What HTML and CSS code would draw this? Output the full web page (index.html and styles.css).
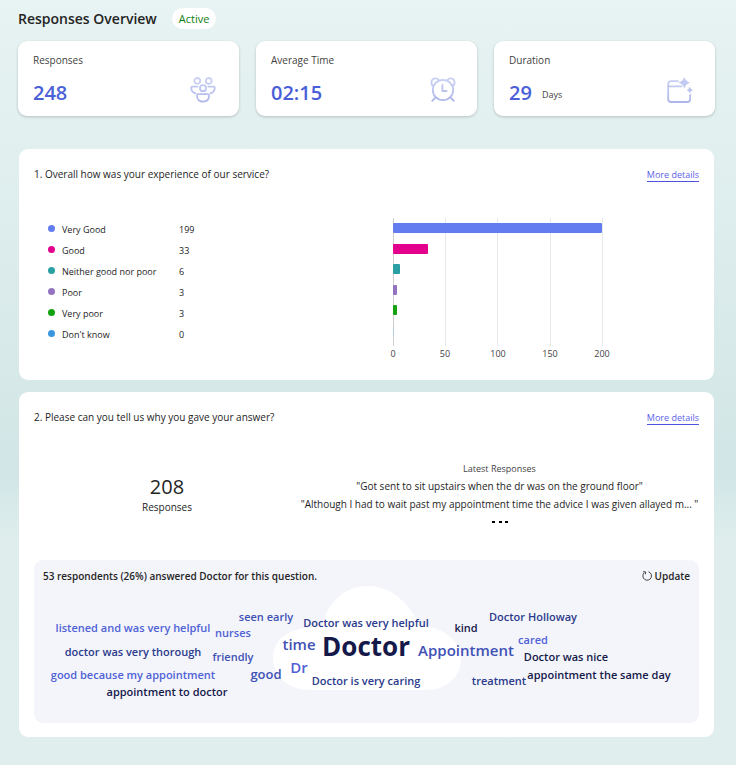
FILE: index.html
```
<!DOCTYPE html>
<html lang="en">

<head>
    <meta charset="UTF-8">
    <meta name="viewport" content="width=device-width, initial-scale=1.0">
    <title>Responses Overview</title>
    <link rel="stylesheet" href="styles.css">
</head>

<body>
    <header class="page-header">
        <h1>Responses Overview</h1>
        <span class="status">Active</span>
    </header>

    <section class="stats">
        <div class="stat">
            <div class="stat-label">Responses</div>
            <div class="stat-row">
                <span class="stat-value">248</span>
                <svg class="stat-icon" viewBox="0 0 26 26" aria-hidden="true">
                    <defs>
                        <linearGradient id="fade" gradientUnits="userSpaceOnUse" x1="0" y1="0" x2="0" y2="26">
                            <stop offset="0" stop-color="#ccd3f5" />
                            <stop offset="1" stop-color="#adb6ea" />
                        </linearGradient>
                    </defs>
                    <g fill="none" stroke="url(#fade)" stroke-width="1.8" stroke-linecap="round" stroke-linejoin="round">
                        <circle cx="7.3" cy="3.9" r="2.9" />
                        <circle cx="18.7" cy="3.9" r="2.9" />
                        <circle cx="13" cy="11.2" r="3" />
                        <path d="M7.7 9.6H2.2Q1.2 9.6 1.2 10.6C1.2 13.6 2.8 15.6 5.5 16.3" />
                        <path d="M18.3 9.6H23.8Q24.8 9.6 24.8 10.6C24.8 13.6 23.2 15.6 20.5 16.3" />
                        <path d="M8.3 17.2H17.7Q19 17.2 19 18.5C19 22.4 16.7 24.6 13 24.6S7 22.4 7 18.5Q7 17.2 8.3 17.2Z" />
                    </g>
                </svg>
            </div>
        </div>
        <div class="stat">
            <div class="stat-label">Average Time</div>
            <div class="stat-row">
                <span class="stat-value">02:15</span>
                <svg class="stat-icon" viewBox="-2 1 26 26" aria-hidden="true">
                    <g fill="none" stroke="url(#fade)" stroke-width="1.8" stroke-linecap="round" stroke-linejoin="round">
                        <circle cx="13" cy="14" r="10.2" />
                        <path d="M12.4 9V15H16.6" />
                        <path d="M2.2 9.4C0.4 6 2 2.6 5 2.4C6.8 2.3 8.2 3.2 8.6 4.4" />
                        <path d="M23.8 9.4C25.6 6 24 2.6 21 2.4C19.2 2.3 17.8 3.2 17.4 4.4" />
                        <path d="M5.5 21.5L2.2 24.8M20.5 21.5L23.8 24.8" />
                    </g>
                </svg>
            </div>
        </div>
        <div class="stat">
            <div class="stat-label">Duration</div>
            <div class="stat-row">
                <span class="stat-value">29</span>
                <span class="stat-unit">Days</span>
                <svg class="stat-icon" viewBox="-1 0 26 26" aria-hidden="true">
                    <g fill="none" stroke="url(#fade)" stroke-width="1.8" stroke-linecap="round" stroke-linejoin="round">
                        <path d="M11 4.2H4.2Q1.2 4.2 1.2 7.2V22Q1.2 25 4.2 25H20.2Q23.2 25 23.2 22V17.8" />
                        <path d="M1.6 9.3H14.4" />
                    </g>
                    <path fill="#c3cbf2" d="M17.3 0Q18.6 4.4 23.2 5.7Q18.6 7 17.3 11.4Q16 7 11.4 5.7Q16 4.4 17.3 0Z" />
                    <path fill="#bcc4f0" d="M22.8 9.8Q23.5 12.3 26 13Q23.5 13.7 22.8 16.2Q22.1 13.7 19.6 13Q22.1 12.3 22.8 9.8Z" />
                </svg>
            </div>
        </div>
    </section>

    <section class="panel">
        <div class="panel-head">
            <h2>1. Overall how was your experience of our service?</h2>
            <a href="#">More details</a>
        </div>
        <div class="choice">
            <table class="legend">
                <tr><th scope="row" class="very-good">Very Good</th><td>199</td></tr>
                <tr><th scope="row" class="good">Good</th><td>33</td></tr>
                <tr><th scope="row" class="neither">Neither good nor poor</th><td>6</td></tr>
                <tr><th scope="row" class="poor">Poor</th><td>3</td></tr>
                <tr><th scope="row" class="very-poor">Very poor</th><td>3</td></tr>
                <tr><th scope="row" class="dont-know">Don't know</th><td>0</td></tr>
            </table>
            <svg class="chart" viewBox="0 0 240 144" role="img" aria-label="Responses per answer">
                <g class="grid-lines">
                    <path class="axis" d="M10.5 0V128" />
                    <path d="M62.5 0V128M114.5 0V128M167.5 0V128M219.5 0V128" />
                </g>
                <rect x="10" y="5" width="209" height="10" rx="1" fill="#637cef" />
                <rect x="10" y="26" width="35" height="10" rx="1" fill="#e3008c" />
                <rect x="10" y="46" width="7" height="10" rx="1" fill="#2aa0a4" />
                <rect x="10" y="67" width="4" height="10" rx="1" fill="#9373c0" />
                <rect x="10" y="87" width="4" height="10" rx="1" fill="#13a10e" />
                <rect x="10" y="108" width="1" height="10" fill="#b5cbdc" />
                <g class="ticks">
                    <text x="10" y="139">0</text>
                    <text x="62" y="139">50</text>
                    <text x="115" y="139">100</text>
                    <text x="167" y="139">150</text>
                    <text x="219" y="139">200</text>
                </g>
            </svg>
        </div>
    </section>

    <section class="panel">
        <div class="panel-head">
            <h2>2. Please can you tell us why you gave your answer?</h2>
            <a href="#">More details</a>
        </div>
        <div class="open-text">
            <div class="total">
                <div class="total-value">208</div>
                <div>Responses</div>
            </div>
            <div class="latest">
                <div class="latest-title">Latest Responses</div>
                <p>"Got sent to sit upstairs when the dr was on the ground floor"</p>
                <p>"Although I had to wait past my appointment time the advice I was given allayed m... "</p>
                <svg class="dots" viewBox="0 0 16 3" aria-hidden="true">
                    <path d="M0 0h3v2h-3zM7 0h3v2h-3zM13 0h3v2h-3z" />
                </svg>
            </div>
        </div>
        <div class="cloud">
            <div class="cloud-head">
                <span>53 respondents (26%) answered Doctor for this question.</span>
                <button type="button">
                    <svg viewBox="0 0 12 12" aria-hidden="true">
                        <path d="M7.5 1.8A4.3 4.3 0 1 1 3.2 2.8M2 1.8H4.5V4.2" />
                    </svg>
                    Update
                </button>
            </div>
            <svg class="words" viewBox="0 0 665 134">
                <path class="cloud-shape" d="M287 38C293 16 309 -3 333 -3S376 14 385 36C410 38 427 52 427 70C427 88 412 101 392 101H276C254 101 239 87 239 68C239 50 256 37 287 38Z" />
                <g class="s">
                    <text class="c3" x="99" y="43">listened and was very helpful</text>
                    <text class="c2" x="232" y="32">seen early</text>
                    <text class="c3" x="199" y="48">nurses</text>
                    <text class="c1" x="99" y="67">doctor was very thorough</text>
                    <text class="c2" x="199" y="72">friendly</text>
                    <text class="c3" x="99" y="90">good because my appointment</text>
                    <text class="c0" x="133" y="107">appointment to doctor</text>
                    <text class="c1" x="332" y="38">Doctor was very helpful</text>
                    <text class="c1" x="332" y="96">Doctor is very caring</text>
                    <text class="c0" x="432" y="43">kind</text>
                    <text class="c1" x="499" y="32">Doctor Holloway</text>
                    <text class="c3" x="499" y="55">cared</text>
                    <text class="c0" x="532" y="72">Doctor was nice</text>
                    <text class="c1" x="465" y="96">treatment</text>
                    <text class="c0" x="565" y="90">appointment the same day</text>
                </g>
                <g class="m">
                    <text class="c2" x="232" y="90">good</text>
                </g>
                <g class="l">
                    <text class="c2" x="265" y="61">time</text>
                    <text class="c3" x="265" y="84">Dr</text>
                    <text class="c2" x="432" y="67">Appointment</text>
                </g>
                <text class="xl" x="332" y="67">Doctor</text>
            </svg>
        </div>
    </section>
</body>

</html>
```
FILE: styles.css
```
body {
    margin: 0;
    padding: 8px 21px 28px 18px;
    font-family: "Open Sans", "Noto Sans", sans-serif;
    font-size: 10px;
    color: #242424;
    background: linear-gradient(#e8f3f3 0, #e1efef 20%, #d6e8e8 50%, #d2e6e7 62%, #dfeeed 71%, #e0eeed 100%);
}

h1,
h2,
p {
    margin: 0;
}

.page-header {
    display: flex;
    align-items: center;
    gap: 15px;
    height: 21px;
    margin-bottom: 12px;
}

h1 {
    font-size: 14px;
    font-weight: 600;
}

.status {
    padding: 0 7px;
    border-radius: 11px;
    font-size: 11px;
    line-height: 21px;
    font-weight: 500;
    color: #107c10;
    background: #fff;
}

/* Summary cards */
.stats {
    display: grid;
    grid-template-columns: repeat(3, 1fr);
    gap: 17px;
    margin-bottom: 33px;
}

.stat {
    box-sizing: border-box;
    height: 75px;
    padding: 11px 23px 0 15px;
    border-radius: 9px;
    background: #fff;
    box-shadow: 0 1px 3px rgba(0, 0, 0, 0.2);
}

.stat-label {
    line-height: 16px;
    color: #424242;
}

.stat-row {
    display: flex;
    align-items: center;
    margin-top: 8px;
    height: 28px;
}

.stat-value {
    padding-top: 5px;
    font-size: 20px;
    font-weight: 600;
    color: #4a5fd8;
}

.stat-unit {
    margin: 8px 0 0 10px;
    font-size: 9px;
    color: #424242;
}

.stat-icon {
    width: 26px;
    height: 26px;
    margin-left: auto;
    overflow: visible;
}

/* Question panels */
.panel {
    margin: 0 1px 12px;
    padding: 15px 15px 14px;
    border-radius: 9px;
    background: #fff;
}

.panel:last-child {
    margin-bottom: 0;
}

.panel-head {
    display: flex;
    justify-content: space-between;
    align-items: flex-start;
    line-height: 20px;
}

h2 {
    font-size: 10px;
    font-weight: 400;
}

.panel-head a {
    margin-top: 5px;
    border-bottom: 1px solid #4f52e0;
    font-size: 9px;
    line-height: 12px;
    color: #5b5fe8;
    text-decoration: none;
}

.choice {
    display: grid;
    grid-template-columns: 349fr 240fr 76fr;
    margin-top: 34px;
    padding-bottom: 4px;
}

.legend {
    align-self: start;
    justify-self: start;
    margin: 1px 0 0 14px;
    border-collapse: collapse;
    font-size: 9px;
}

.legend tr {
    height: 21px;
}

.legend th {
    width: 131px;
    padding: 0;
    font-weight: 400;
    text-align: left;
}

.legend td {
    padding: 0;
}

.legend th::before {
    content: "";
    display: inline-block;
    width: 7px;
    height: 7px;
    margin-right: 7px;
    border-radius: 50%;
    vertical-align: 1px;
    background: currentColor;
}

.very-good::before { color: #637cef; }
.good::before { color: #e3008c; }
.neither::before { color: #2aa0a4; }
.poor::before { color: #9373c0; }
.very-poor::before { color: #13a10e; }
.dont-know::before { color: #3a96dd; }

.chart {
    width: 100%;
}

.grid-lines path {
    stroke: #e8e8e8;
}

.grid-lines .axis {
    stroke: #cfcfcf;
}

.ticks text {
    font-size: 9px;
    text-anchor: middle;
    fill: #424242;
}

.open-text {
    display: grid;
    grid-template-columns: 2fr 3fr;
    margin-top: 34px;
    height: 99px;
}

.total {
    padding-top: 13px;
    line-height: 16px;
    text-align: center;
}

.total-value {
    font-size: 20px;
    line-height: 25px;
}

.latest {
    line-height: 18px;
    text-align: center;
    white-space: nowrap;
}

.latest-title {
    font-size: 9px;
    line-height: 16px;
    color: #424242;
}

.dots {
    display: block;
    width: 16px;
    height: 3px;
    margin: 8px auto 0;
}

/* Word cloud */
.cloud {
    border-radius: 9px;
    background: #f4f5fb;
}

.cloud-head {
    display: flex;
    justify-content: space-between;
    padding: 6px 9px 3px;
    line-height: 20px;
    font-weight: 600;
    color: #242424;
}

.cloud-head button {
    display: flex;
    align-items: center;
    gap: 2px;
    padding: 0;
    border: 0;
    font: inherit;
    color: inherit;
    background: none;
    cursor: pointer;
}

.cloud-head svg {
    width: 12px;
    height: 12px;
    fill: none;
    stroke: #424242;
}

.words {
    display: block;
    width: 100%;
    overflow: visible;
    font-weight: 600;
    text-anchor: middle;
}

.cloud-shape {
    fill: #fff;
}

.words .s { font-size: 11px; }
.words .m { font-size: 13px; }
.words .l { font-size: 15px; }

.words .xl {
    font-size: 26px;
    font-weight: 700;
    fill: #14194a;
}

.words .c0 { fill: #14194a; }
.words .c1 { fill: #2b3a8c; }
.words .c2 { fill: #3f51b5; }
.words .c3 { fill: #4f62d6; }
```
